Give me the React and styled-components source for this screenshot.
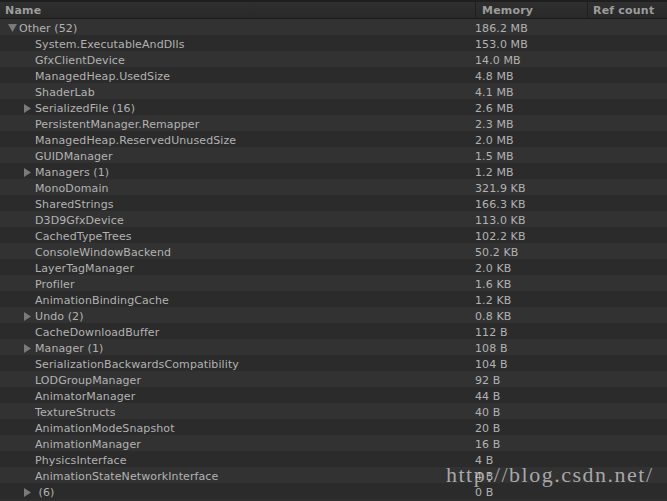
import React from 'react';
import styled, { createGlobalStyle } from 'styled-components';

const Global = createGlobalStyle`
  html, body { margin: 0; padding: 0; background: #2f2f2f; }
  body { width: 667px; height: 501px; overflow: hidden; }
`;

const rows = [
  { name: 'Other (52)', mem: '186.2 MB', depth: 0, arrow: 'down' },
  { name: 'System.ExecutableAndDlls', mem: '153.0 MB', depth: 1 },
  { name: 'GfxClientDevice', mem: '14.0 MB', depth: 1 },
  { name: 'ManagedHeap.UsedSize', mem: '4.8 MB', depth: 1 },
  { name: 'ShaderLab', mem: '4.1 MB', depth: 1 },
  { name: 'SerializedFile (16)', mem: '2.6 MB', depth: 1, arrow: 'right' },
  { name: 'PersistentManager.Remapper', mem: '2.3 MB', depth: 1 },
  { name: 'ManagedHeap.ReservedUnusedSize', mem: '2.0 MB', depth: 1 },
  { name: 'GUIDManager', mem: '1.5 MB', depth: 1 },
  { name: 'Managers (1)', mem: '1.2 MB', depth: 1, arrow: 'right' },
  { name: 'MonoDomain', mem: '321.9 KB', depth: 1 },
  { name: 'SharedStrings', mem: '166.3 KB', depth: 1 },
  { name: 'D3D9GfxDevice', mem: '113.0 KB', depth: 1 },
  { name: 'CachedTypeTrees', mem: '102.2 KB', depth: 1 },
  { name: 'ConsoleWindowBackend', mem: '50.2 KB', depth: 1 },
  { name: 'LayerTagManager', mem: '2.0 KB', depth: 1 },
  { name: 'Profiler', mem: '1.6 KB', depth: 1 },
  { name: 'AnimationBindingCache', mem: '1.2 KB', depth: 1 },
  { name: 'Undo (2)', mem: '0.8 KB', depth: 1, arrow: 'right' },
  { name: 'CacheDownloadBuffer', mem: '112 B', depth: 1 },
  { name: 'Manager (1)', mem: '108 B', depth: 1, arrow: 'right' },
  { name: 'SerializationBackwardsCompatibility', mem: '104 B', depth: 1 },
  { name: 'LODGroupManager', mem: '92 B', depth: 1 },
  { name: 'AnimatorManager', mem: '44 B', depth: 1 },
  { name: 'TextureStructs', mem: '40 B', depth: 1 },
  { name: 'AnimationModeSnapshot', mem: '20 B', depth: 1 },
  { name: 'AnimationManager', mem: '16 B', depth: 1 },
  { name: 'PhysicsInterface', mem: '4 B', depth: 1 },
  { name: 'AnimationStateNetworkInterface', mem: '4 B', depth: 1 },
  { name: '\u00a0(6)', mem: '0 B', depth: 1, arrow: 'right' },
];

const Panel = styled.div`
  position: relative;
  width: 667px;
  height: 501px;
  overflow: hidden;
  background: #2f2f2f;
  font-family: "DejaVu Sans", "Liberation Sans", sans-serif;
  font-size: 11px;
  color: #b2b2b2;
`;

const Header = styled.div`
  display: grid;
  grid-template-columns: 475px 112px 1fr;
  height: 16px;
  border-top: 2px solid #1f1f1f;
  border-bottom: 1px solid #1b1b1b;
  background: linear-gradient(#2f2f2f, #292929);
`;

const HeadCell = styled.div`
  display: flex;
  align-items: center;
  padding-left: ${p => p.$pad}px;
  border-left: ${p => (p.$first ? 'none' : '1px solid #1e1e1e')};
  font-weight: bold;
  color: #9c9c9c;
  letter-spacing: 0.2px;
`;

const Row = styled.div`
  display: grid;
  grid-template-columns: 475px 112px 1fr;
  height: 16px;
  line-height: 16px;
  background: ${p => (p.$odd ? '#2b2b2b' : '#323232')};
`;

const NameCell = styled.div`
  display: flex;
  align-items: center;
  padding-left: ${p => 8 + p.$depth * 16}px;
  white-space: nowrap;
`;

const Arrow = styled.span`
  width: 11px;
  height: 16px;
  flex: none;
  display: flex;
  align-items: center;
`;

const Label = styled.span`
  padding-top: 2px;
  letter-spacing: 0.1px;
`;

const MemCell = styled.div`
  padding-top: 2px;
  white-space: nowrap;
  letter-spacing: 0.1px;
`;

const Watermark = styled.div`
  position: absolute;
  left: 446px;
  top: 462px;
  font-family: "Liberation Serif", "DejaVu Serif", serif;
  font-size: 22px;
  letter-spacing: 1.5px;
  color: rgba(215, 215, 215, 0.72);
  white-space: nowrap;
`;

function Triangle({ dir }) {
  if (dir === 'down') {
    return (
      <svg width="9" height="8" viewBox="0 0 9 8">
        <path d="M0 0 L9 0 L4.5 8 Z" fill="#7a7a7a" />
      </svg>
    );
  }
  return (
    <svg width="7" height="9" viewBox="0 0 7 9">
      <path d="M0 0 L7 4.5 L0 9 Z" fill="#7a7a7a" />
    </svg>
  );
}

export default function App() {
  return (
    <Panel>
      <Global />
      <Header>
        <HeadCell $first $pad={5}>Name</HeadCell>
        <HeadCell $pad={6}>Memory</HeadCell>
        <HeadCell $pad={5}>Ref count</HeadCell>
      </Header>
      {rows.map((r, i) => (
        <Row key={i} $odd={i % 2 === 1}>
          <NameCell $depth={r.depth}>
            <Arrow>{r.arrow && <Triangle dir={r.arrow} />}</Arrow>
            <Label>{r.name}</Label>
          </NameCell>
          <MemCell>{r.mem}</MemCell>
          <div />
        </Row>
      ))}
      <Watermark>http://blog.csdn.net/</Watermark>
    </Panel>
  );
}
